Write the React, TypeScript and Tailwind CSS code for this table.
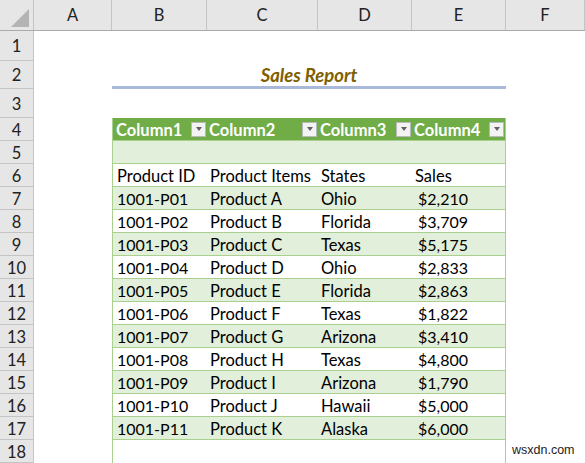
import React from 'react';

const cols = ['A', 'B', 'C', 'D', 'E', 'F'];
const colW = ['w-[78px]', 'w-[95px]', 'w-[111px]', 'w-[94px]', 'w-[94px]', 'w-[79px]'];

const data = [
  ['1001-P01', 'Product A', 'Ohio', '$2,210'],
  ['1001-P02', 'Product B', 'Florida', '$3,709'],
  ['1001-P03', 'Product C', 'Texas', '$5,175'],
  ['1001-P04', 'Product D', 'Ohio', '$2,833'],
  ['1001-P05', 'Product E', 'Florida', '$2,863'],
  ['1001-P06', 'Product F', 'Texas', '$1,822'],
  ['1001-P07', 'Product G', 'Arizona', '$3,410'],
  ['1001-P08', 'Product H', 'Texas', '$4,800'],
  ['1001-P09', 'Product I', 'Arizona', '$1,790'],
  ['1001-P10', 'Product J', 'Hawaii', '$5,000'],
  ['1001-P11', 'Product K', 'Alaska', '$6,000'],
];

const RowHead = ({ n, h }: { n: number; h: string }) => (
  <div className={`w-[34px] ${h} shrink-0 bg-[#e6e6e6] border-r border-b border-[#c4c4c4] flex items-center justify-center pt-[2px] text-[16.5px] text-[#222]`}>
    {n}
  </div>
);

const Drop = () => (
  <div className="w-[15px] h-[15px] bg-[#f3f3f3] border border-[#b9b9b9] flex items-center justify-center">
    <div className="w-0 h-0 border-l-[3.5px] border-r-[3.5px] border-t-[4px] border-l-transparent border-r-transparent border-t-[#606060]" />
  </div>
);

const Line = ({ n, h, children }: { n: number; h: string; children?: React.ReactNode }) => (
  <div className={`flex ${h}`}>
    <RowHead n={n} h={h} />
    <div className="w-[78px] shrink-0" />
    {children ?? <div className="w-[394px] shrink-0" />}
    <div className="w-[79px] shrink-0" />
  </div>
);

const TableRow = ({ cells, bg, sales }: { cells: string[]; bg: string; sales?: boolean }) => (
  <div className={`w-[394px] shrink-0 flex border-x border-b border-[#a9d08e] pt-[2px] ${bg}`}>
    <div className={`w-[94px] pl-[4px] flex items-center ${sales ? 'text-[16px]' : ''}`}>{cells[0]}</div>
    <div className="w-[111px] pl-[3px] flex items-center">{cells[1]}</div>
    <div className="w-[94px] pl-[3px] flex items-center">{cells[2]}</div>
    <div className={`w-[93px] ${sales ? 'pl-[6px] text-[16px]' : 'pl-[3px]'} flex items-center`}>{cells[3]}</div>
  </div>
);

export default function App() {
  return (
    <div className="w-[585px] h-[463px] overflow-hidden bg-white text-[16.5px] text-black relative" style={{ fontFamily: 'Lato, "Open Sans", sans-serif' }}>
      {/* column headers */}
      <div className="flex h-[31px] bg-[#e6e6e6] border-b border-[#ababab]">
        <div className="w-[34px] shrink-0 border-r border-[#c4c4c4] relative">
          <div className="absolute right-[4px] bottom-[3px] w-0 h-0 border-l-[18px] border-b-[18px] border-l-transparent border-b-[#b4b4b4]" />
        </div>
        {cols.map((c, i) => (
          <div key={c} className={`${colW[i]} shrink-0 border-r border-[#c4c4c4] flex items-center justify-center text-[16.5px] text-[#222]`}>
            {c}
          </div>
        ))}
      </div>

      <Line n={1} h="h-[30px]" />
      <Line n={2} h="h-[28px]">
        <div className="w-[394px] shrink-0 border-b-[3px] border-[#a9b9dc] flex items-center justify-center font-bold italic text-[18.5px] text-[#7f6000] pt-[5px]">
          Sales Report
        </div>
      </Line>
      <Line n={3} h="h-[29px]" />

      {/* table header */}
      <Line n={4} h="h-[23px]">
        <div className="w-[394px] shrink-0 flex bg-[#70ad47] text-white font-bold border-x border-b border-[#a9d08e]">
          {['Column1', 'Column2', 'Column3', 'Column4'].map((t, i) => (
            <div key={t} className={`${['w-[94px]', 'w-[111px]', 'w-[94px]', 'w-[93px]'][i]} ${i === 0 ? 'pl-[3px]' : 'pl-[2px]'} pr-[1px] flex items-center justify-between`}>
              <span className="pt-[2px]">{t}</span>
              <Drop />
            </div>
          ))}
        </div>
      </Line>
      <Line n={5} h="h-[23px]">
        <TableRow cells={['', '', '', '']} bg="bg-[#e2efda]" />
      </Line>
      <Line n={6} h="h-[23px]">
        <TableRow cells={['Product ID', 'Product Items', 'States', 'Sales']} bg="bg-white" />
      </Line>
      {data.map((r, i) => (
        <Line key={r[0]} n={7 + i} h="h-[23px]">
          <TableRow cells={r} bg={i % 2 === 0 ? 'bg-[#e2efda]' : 'bg-white'} sales />
        </Line>
      ))}
      <Line n={18} h="h-[23px]">
        <div className="w-[394px] shrink-0 border-x border-[#a9d08e]" />
      </Line>

      <div className="absolute left-[512px] top-[441px] text-[12.5px] text-[#222]" style={{ fontFamily: '"Liberation Sans", Arial, sans-serif' }}>
        wsxdn.com
      </div>
    </div>
  );
}
